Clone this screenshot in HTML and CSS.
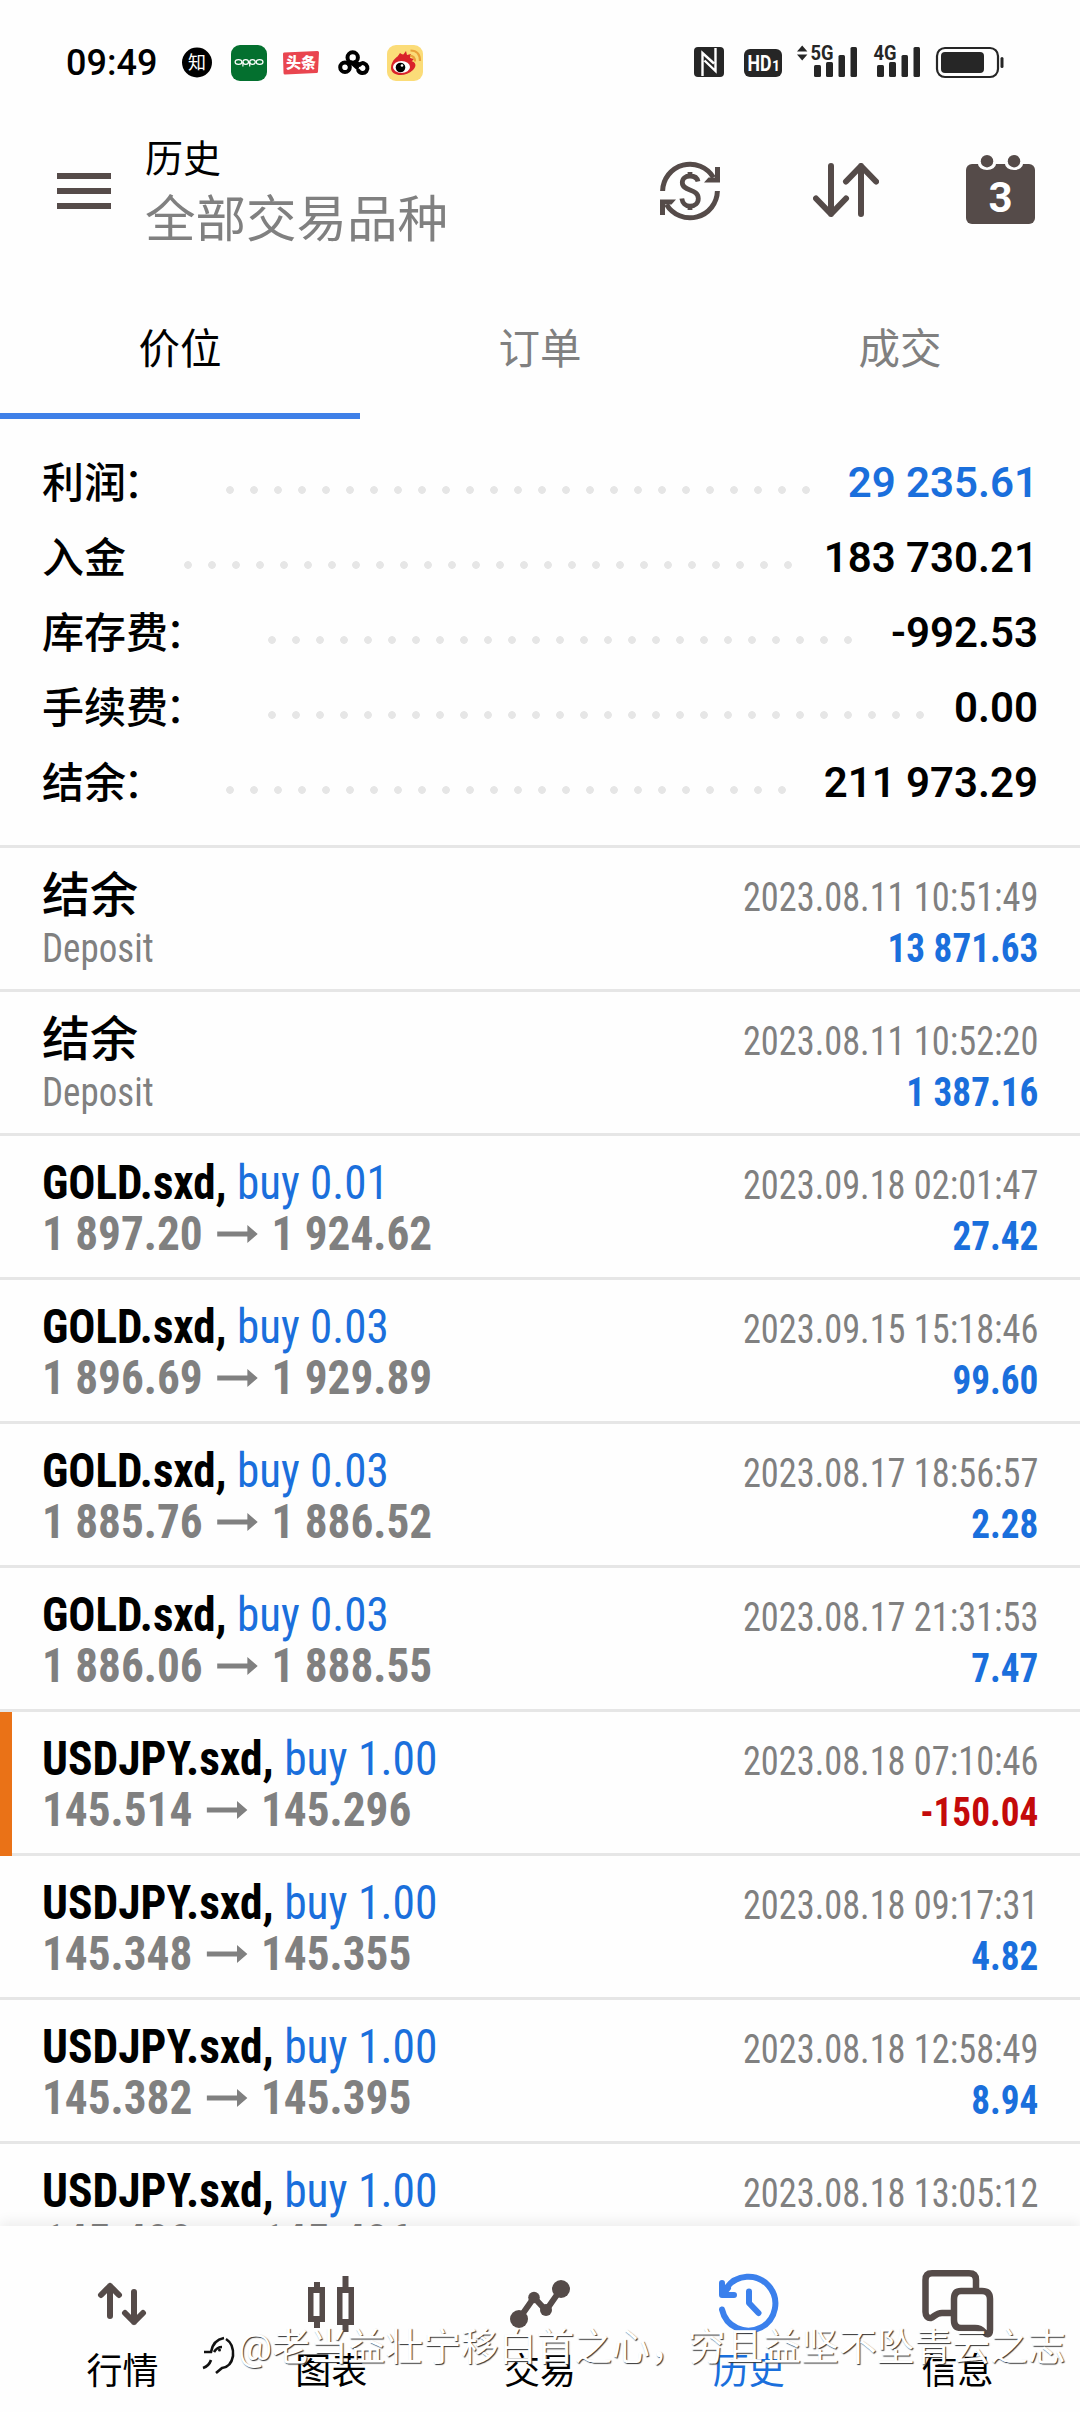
FILE: index.html
```html
<!DOCTYPE html>
<html lang="zh-CN">
<head>
<meta charset="utf-8">
<title>历史</title>
<link rel="stylesheet" href="styles.css">
</head>
<body>
<div class="screen">
  <div class="status">
    <span class="clock">09:49</span>
    <svg class="apps" width="246" height="44" viewBox="180 41 246 44">
      <circle cx="197" cy="62.5" r="15"/>
      <text x="197" y="68.5" class="zhi">知</text>
      <rect x="231" y="45" width="36" height="36" rx="9" fill="#04702f"/>
      <g fill="none" stroke="#fff" stroke-width="1.2">
        <ellipse cx="238.500" cy="62" rx="3.400" ry="2.300"/><ellipse cx="245.700" cy="62" rx="2.800" ry="2.300"/>
        <ellipse cx="252.500" cy="62" rx="2.800" ry="2.300"/><ellipse cx="259.600" cy="62" rx="3.400" ry="2.300"/>
        <path d="M242.900 62v4.500M249.700 62v4.500"/>
      </g>
      <path d="M284 52.500L317.500 51Q319 51 319 52.500L318 71.500Q318 73 316.500 73L285 74.500Q283.500 74.500 283.500 73L283 54Q283 52.600 284 52.500Z" fill="#e9454f"/>
      <text x="301" y="68.300" class="toutiao">头条</text>
      <g fill="none" stroke="#000" stroke-width="4" stroke-linecap="round" stroke-linejoin="round">
        <circle cx="352.700" cy="57.500" r="5.200"/>
        <circle cx="345" cy="67.300" r="4.800"/>
        <path d="M355.500 62L359.500 65Q362 62.300 364 63.400A4.900 4.900 0 1 1 358.300 70.500M349 64.500L351.500 62.500L357 67.500"/>
      </g>
      <rect x="387" y="45" width="36" height="36" rx="9" fill="#fbdc78"/>
      <path d="M391 68C391 60 399 54 403 54.500C406 55 405 58 405 58C408 57 412 57 411 61C416 62 417 66 413 70C405 78 391 76 391 68Z" fill="#d9222a"/>
      <path d="M398 56l2-3 3 2 3-4 1 4 4-1-1 4 4 1-3 3z" fill="#d9222a"/>
      <ellipse cx="401.500" cy="67" rx="8.500" ry="6" fill="#fff"/>
      <circle cx="400.500" cy="67.500" r="4.800"/><circle cx="402" cy="65.500" r="1.300" fill="#fff"/>
      <path d="M410 55.500Q415 56 415 61.500M410.500 50.500Q420 50.500 420 61" fill="none" stroke="#e9a33a" stroke-width="2.200"/>
    </svg>
    <svg class="signals" width="312" height="40" viewBox="693 40 312 40" fill="#262626">
      <rect x="694" y="47" width="30" height="30" rx="4"/>
      <path d="M702.500 76V53L714 63.500M715.500 48V71L704.500 60.500" fill="none" stroke="#fff" stroke-width="2.400"/>
      <rect x="744" y="49" width="38" height="28" rx="6"/>
      <text x="747.500" y="70.500" class="hd" textLength="24" lengthAdjust="spacingAndGlyphs">HD</text>
      <text x="772" y="71" class="hd-index">1</text>
      <path d="M797 51.500L802.200 45.500 807.400 51.500ZM797 54.500H807.400L802.200 60.500Z"/>
      <text x="810.500" y="60" class="net" textLength="23" lengthAdjust="spacingAndGlyphs">5G</text>
      <rect x="814" y="65" width="7" height="12" rx="1.500"/><rect x="826" y="62" width="7" height="15" rx="1.500"/>
      <rect x="838.500" y="55" width="6.500" height="22" rx="1.500"/><rect x="850.500" y="47" width="6.500" height="30" rx="1.500"/>
      <text x="873.500" y="60" class="net" textLength="23" lengthAdjust="spacingAndGlyphs">4G</text>
      <rect x="877" y="65" width="7" height="12" rx="1.500"/><rect x="889" y="62" width="7" height="15" rx="1.500"/>
      <rect x="901.500" y="55" width="6.500" height="22" rx="1.500"/><rect x="913.500" y="47" width="6.500" height="30" rx="1.500"/>
      <rect x="937" y="48" width="61" height="29" rx="8" fill="none" stroke="#262626" stroke-width="2.200"/>
      <rect x="941" y="52" width="43" height="21" rx="4"/>
      <rect x="1000.500" y="57" width="3" height="11" rx="1.500"/>
    </svg>
  </div>

  <header class="header">
    <svg class="menu" width="54" height="36" viewBox="0 0 54 36"><path d="M0 0h54v6H0zM0 15h54v6H0zM0 30h54v6H0z"/></svg>
    <div class="titles"><div class="title">历史</div><div class="subtitle">全部交易品种</div></div>
    <div class="actions">
      <svg width="60" height="60" viewBox="0 0 60 60" fill="none" stroke="#554b49" stroke-width="5">
        <path d="M2.600 30A27.400 27.400 0 0 1 53.500 16.500M57.400 30A27.400 27.400 0 0 1 6.500 43.500"/>
        <path d="M60 6V21.500H44L48.500 16.500H55V6Z M0 54V38.500H16L11.500 43.500H5V54Z" fill="#554b49" stroke="none"/>
        <path d="M38 20.500C37 15.800 33.500 15 30 15C25.500 15 22.300 17.500 22.300 21.500C22.300 31 38.300 27 38.300 37.500C38.300 42 35 45.200 30 45.200C25.500 45.200 22.500 42 21.800 37.500M30 11V16M30 44V49" stroke-width="4.800"/>
      </svg>
      <svg width="66" height="54" viewBox="0 0 66 54" fill="none" stroke="#554b49" stroke-width="6" stroke-linecap="round" stroke-linejoin="round">
        <path d="M18 3V51M3 35.500L18 51 33 35.500M48 51V3M33 18.500L48 3 63 18.500"/>
      </svg>
      <svg width="69" height="69" viewBox="0 0 69 69">
        <rect y="9" width="69" height="60" rx="6" fill="#554b49"/>
        <path d="M12 6v3a9 6 0 0 0 9 6a9 6 0 0 0 9-6V6ZM39 6v3a9 6 0 0 0 9 6a9 6 0 0 0 9-6V6Z" fill="#fefefe"/>
        <circle cx="21" cy="6.200" r="6.200" fill="#554b49"/><circle cx="48" cy="6.200" r="6.200" fill="#554b49"/>
        <text x="34.500" y="56.500" class="day">3</text>
      </svg>
    </div>
  </header>

  <nav class="tabs"><div class="tab active">价位</div><div class="tab">订单</div><div class="tab">成交</div></nav>

  <section class="summary">
    <div class="sum"><span class="label">利润<span class="colon">：</span></span><i class="dots"></i><b class="blue">29 235.61</b></div>
    <div class="sum"><span class="label">入金</span><i class="dots"></i><b>183 730.21</b></div>
    <div class="sum"><span class="label">库存费<span class="colon">：</span></span><i class="dots"></i><b>-992.53</b></div>
    <div class="sum"><span class="label">手续费<span class="colon">：</span></span><i class="dots"></i><b>0.00</b></div>
    <div class="sum"><span class="label">结余<span class="colon">：</span></span><i class="dots"></i><b>211 973.29</b></div>
  </section>

  <main class="list">
    <div class="row"><div class="left"><div class="name cjk">结余</div><div class="note">Deposit</div></div><div class="right"><div class="date">2023.08.11 10:51:49</div><div class="value">13 871.63</div></div></div>
    <div class="row"><div class="left"><div class="name cjk">结余</div><div class="note">Deposit</div></div><div class="right"><div class="date">2023.08.11 10:52:20</div><div class="value">1 387.16</div></div></div>
    <div class="row"><div class="left"><div class="name">GOLD.sxd, <span class="side">buy 0.01</span></div><div class="price">1 897.20 <svg class="arrow" viewBox="0 0 43 18"><path d="M0 6.500H32V0L43 9 32 18V11.500H0Z"/></svg> 1 924.62</div></div><div class="right"><div class="date">2023.09.18 02:01:47</div><div class="value">27.42</div></div></div>
    <div class="row"><div class="left"><div class="name">GOLD.sxd, <span class="side">buy 0.03</span></div><div class="price">1 896.69 <svg class="arrow" viewBox="0 0 43 18"><path d="M0 6.500H32V0L43 9 32 18V11.500H0Z"/></svg> 1 929.89</div></div><div class="right"><div class="date">2023.09.15 15:18:46</div><div class="value">99.60</div></div></div>
    <div class="row"><div class="left"><div class="name">GOLD.sxd, <span class="side">buy 0.03</span></div><div class="price">1 885.76 <svg class="arrow" viewBox="0 0 43 18"><path d="M0 6.500H32V0L43 9 32 18V11.500H0Z"/></svg> 1 886.52</div></div><div class="right"><div class="date">2023.08.17 18:56:57</div><div class="value">2.28</div></div></div>
    <div class="row"><div class="left"><div class="name">GOLD.sxd, <span class="side">buy 0.03</span></div><div class="price">1 886.06 <svg class="arrow" viewBox="0 0 43 18"><path d="M0 6.500H32V0L43 9 32 18V11.500H0Z"/></svg> 1 888.55</div></div><div class="right"><div class="date">2023.08.17 21:31:53</div><div class="value">7.47</div></div></div>
    <div class="row flagged"><div class="left"><div class="name fx">USDJPY.sxd, <span class="side">buy 1.00</span></div><div class="price">145.514 <svg class="arrow" viewBox="0 0 43 18"><path d="M0 6.500H32V0L43 9 32 18V11.500H0Z"/></svg> 145.296</div></div><div class="right"><div class="date">2023.08.18 07:10:46</div><div class="value loss">-150.04</div></div></div>
    <div class="row"><div class="left"><div class="name fx">USDJPY.sxd, <span class="side">buy 1.00</span></div><div class="price">145.348 <svg class="arrow" viewBox="0 0 43 18"><path d="M0 6.500H32V0L43 9 32 18V11.500H0Z"/></svg> 145.355</div></div><div class="right"><div class="date">2023.08.18 09:17:31</div><div class="value">4.82</div></div></div>
    <div class="row"><div class="left"><div class="name fx">USDJPY.sxd, <span class="side">buy 1.00</span></div><div class="price">145.382 <svg class="arrow" viewBox="0 0 43 18"><path d="M0 6.500H32V0L43 9 32 18V11.500H0Z"/></svg> 145.395</div></div><div class="right"><div class="date">2023.08.18 12:58:49</div><div class="value">8.94</div></div></div>
    <div class="row"><div class="left"><div class="name fx">USDJPY.sxd, <span class="side">buy 1.00</span></div><div class="price">145.400 <svg class="arrow" viewBox="0 0 43 18"><path d="M0 6.500H32V0L43 9 32 18V11.500H0Z"/></svg> 145.406</div></div><div class="right"><div class="date">2023.08.18 13:05:12</div></div></div>
  </main>

  <footer class="nav">
    <div class="item">
      <svg width="72" height="72" viewBox="86 2268 72 72" fill="none" stroke="#554b49" stroke-width="6" stroke-linecap="round" stroke-linejoin="round"><path d="M110 2316V2286M101 2295L110 2286 119 2295M134 2292V2322M125 2313L134 2322 143 2313"/></svg>
      <span>行情</span>
    </div>
    <div class="item">
      <svg width="72" height="72" viewBox="295 2268 72 72"><g fill="#554b49"><path d="M314 2282h6v6h-6zM314 2321h6v7h-6zM342.500 2276h6v12h-6zM342.500 2324h6v8h-6z"/><path fill-rule="evenodd" d="M308 2287h17v35h-17zM313.500 2293h6v23h-6zM337 2287h17v38h-17zM342.500 2293h6v26h-6z"/></g></svg>
      <span>图表</span>
    </div>
    <div class="item">
      <svg width="72" height="72" viewBox="504 2268 72 72"><path d="M519 2319L534 2297.500 546 2310.500 561 2289" fill="none" stroke="#554b49" stroke-width="6"/><g fill="#554b49"><circle cx="519" cy="2319" r="9"/><circle cx="534" cy="2297.500" r="5.800"/><circle cx="546" cy="2310" r="6"/><circle cx="561" cy="2289" r="9"/></g></svg>
      <span>交易</span>
    </div>
    <div class="item current">
      <svg width="72" height="72" viewBox="713 2268 72 72" fill="none" stroke="#3b80ec" stroke-width="6" stroke-linecap="round" stroke-linejoin="round"><path d="M722 2309.500A27 27 0 1 0 726 2288.500M722 2283V2295H734M722.500 2294.500L728 2288M749 2291.500V2303L758.500 2313"/></svg>
      <span>历史</span>
    </div>
    <div class="item">
      <svg width="72" height="72" viewBox="922 2268 72 72" fill="none" stroke="#554b49" stroke-width="6.500" stroke-linecap="round" stroke-linejoin="round"><path d="M951 2313H942C936 2313 934 2317 931 2318C928 2318.500 925.500 2316 925.500 2312V2280Q925.500 2273.300 932 2273.300H969Q976 2273.300 976 2280V2290"/><path d="M961 2291H982Q990 2291 990 2299V2330C990 2335 987 2335.500 984 2332C981 2328.500 979 2328 975 2328H961Q954 2328 954 2320V2299Q954 2291 961 2291Z"/></svg>
      <span>信息</span>
    </div>
    <div class="watermark">
      <svg width="36" height="42" viewBox="200 2334 36 42" fill="none"><path d="M204 2352H211Q213 2340 224 2338M203 2368Q209 2366 211 2360M226 2339Q234 2344 233 2356Q231 2367 222 2368L216 2373M214 2352Q217 2347 222 2347" stroke="#111" stroke-width="2.600"/><circle cx="219.500" cy="2350" r="1.500" fill="#111"/></svg>
      <span>@老当益壮宁移白首之心，穷且益坚不坠青云之志</span>
    </div>
  </footer>
</div>
</body>
</html>
```
FILE: styles.css
```css
* { box-sizing: border-box; }
body { margin: 0; background: #fefefe; color: #000; font-family: Roboto, "Noto Sans CJK SC", sans-serif; }
svg { display: block; flex: none; }
.screen { width: 1080px; height: 2412px; display: flex; flex-direction: column; overflow: hidden; }

.status { height: 96px; display: flex; align-items: flex-start; padding: 41px 75px 0 66px; }
.clock { width: 114px; font-size: 36px; line-height: 44px; font-weight: 500; }
.signals { margin: -1px 0 0 auto; }
.zhi { font-size: 18px; fill: #fff; text-anchor: middle; }
.toutiao { font-size: 15px; font-weight: 900; fill: #fff; text-anchor: middle; }
.hd { font-size: 22px; font-weight: 700; fill: #fff; }
.hd-index { font-size: 14px; font-weight: 700; fill: #fff; }
.net { font-size: 21px; font-weight: 700; }

.header { height: 184px; display: flex; align-items: flex-start; padding: 0 45px 0 57px; }
.menu { margin-top: 77px; fill: #554b49; }
.titles { margin: 41px 0 0 34px; }
.title { font-size: 38px; line-height: 44px; }
.subtitle { margin-top: 7px; font-size: 50.500px; line-height: 64px; color: #808080; }
.actions { margin-left: auto; margin-top: 59px; display: flex; align-items: center; }
.actions svg { margin-left: 87px; }
.actions svg:first-child { margin: 2px 6px 0 0; }
.day { font-size: 42px; font-weight: 700; fill: #fff; text-anchor: middle; }

.tabs { height: 139px; display: flex; }
.tab { flex: 1; padding-top: 49px; border-bottom: 6px solid transparent; text-align: center; font-size: 41.500px; line-height: 42px; color: #808080; }
.tab.active { color: #000; border-color: #3f80e8; }

.summary { height: 429px; padding: 26px 42px 0; border-bottom: 3px solid #e6e6e6; }
.sum { height: 75px; display: flex; font-size: 42px; line-height: 75px; font-weight: 500; }
.sum b { font-weight: 600; }
.sum b.blue { color: #1a6fdc; }
.label { padding-top: 1px; height: 75px; }
.colon { font-weight: 400; margin: 0 3px 0 -3px; }
.dots { flex: 1; height: 24px; margin: 33px 24px 0 58px; background: radial-gradient(circle at 4px 12px, #e6e6e6 3.500px, transparent 4.200px) 0 0 / 24px 24px; }

.list { flex: 1; min-height: 0; overflow: hidden; }
.row { height: 144px; display: flex; justify-content: space-between; padding: 0 42px; border-bottom: 3px solid #e6e6e6; font-stretch: 75%; font-family: "Roboto Condensed", Roboto, "Noto Sans CJK SC", sans-serif; white-space: nowrap; }
.row.flagged { position: relative; }
.row.flagged::before { content: ""; position: absolute; left: 0; top: 0; bottom: -3px; width: 12px; background: #ea7217; }
.left { padding-top: 22px; }
/* The face is slightly wider than a true condensed cut, so each line is narrowed. */
.name, .note, .price { transform-origin: 0 50%; }
.name { font-size: 48px; line-height: 50px; font-weight: 700; transform: scaleX(.938); }
.name.fx { transform: scaleX(.948); }
.name.cjk { font-weight: 500; transform: translateY(1px); }
.side { font-weight: 400; color: #1a6fdc; }
.note { font-size: 40px; line-height: 58px; color: #808080; transform: scaleX(.925); }
.price { display: flex; align-items: center; gap: 14px; font-size: 48px; line-height: 52px; font-weight: 700; color: #808080; transform: scaleX(.942); }
.arrow { width: 45px; height: 18px; fill: #808080; }
.right { padding-top: 25px; text-align: right; font-size: 40px; }
.date, .value { transform-origin: 100% 50%; }
.date { line-height: 50px; color: #808080; transform: scaleX(.908); }
.value { line-height: 52px; font-weight: 700; color: #1a6fdc; transform: scaleX(.93); }
.value.loss { color: #c40a0a; }

.nav { position: relative; height: 186px; padding: 42px 18px 0; display: flex; background: #fefefe; box-shadow: 0 -4px 12px rgba(0,0,0,.07); }
.item { flex: 1; display: flex; flex-direction: column; align-items: center; font-size: 36px; line-height: 42px; }
.item span { margin-top: 11px; }
.item.current { color: #1a6fdc; }
.watermark { position: absolute; left: 200px; top: 94px; display: flex; gap: 2px; font-size: 37.800px; line-height: 54px; color: #fff; white-space: nowrap; text-shadow: 1px 1px 1px #333; }
.watermark svg { margin-top: 14px; }
```
